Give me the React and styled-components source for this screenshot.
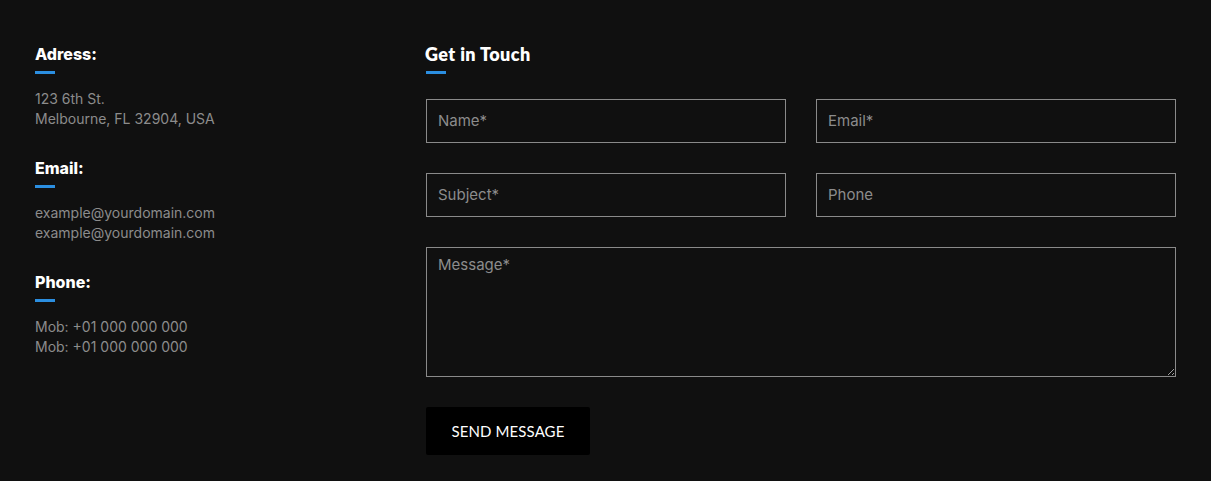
import styled, { createGlobalStyle } from 'styled-components'

const Global = createGlobalStyle`
  html, body {
    margin: 0;
    background: #101010;
  }
  * { box-sizing: border-box; }
`

const info = [
  { title: 'Adress:', lines: ['123 6th St.', 'Melbourne, FL 32904, USA'] },
  { title: 'Email:', lines: ['example@yourdomain.com', 'example@yourdomain.com'] },
  { title: 'Phone:', lines: ['Mob: +01 000 000 000', 'Mob: +01 000 000 000'] },
]

export default function App() {
  return (
    <>
      <Global />
      <Page>
        <Aside>
          {info.map((item) => (
            <Block key={item.title}>
              <Titulo>{item.title}</Titulo>
              <Linea />
              <Texto>
                {item.lines.map((l, i) => <span key={i}>{l}</span>)}
              </Texto>
            </Block>
          ))}
        </Aside>

        <Form onSubmit={(e) => e.preventDefault()}>
          <FormTitulo>Get in Touch</FormTitulo>
          <Linea />
          <Grid>
            <Input placeholder="Name*" />
            <Input placeholder="Email*" />
            <Input placeholder="Subject*" />
            <Input placeholder="Phone" />
            <Area placeholder="Message*" />
          </Grid>
          <Boton type="submit">Send Message</Boton>
        </Form>
      </Page>
    </>
  )
}

const Page = styled.div`
  width: 1211px;
  height: 481px;
  padding: 44px 35px 0 35px;
  display: grid;
  grid-template-columns: 391px 750px;
  font-family: Inter, "Open Sans", sans-serif;
`

const Aside = styled.div`
  display: flex;
  flex-direction: column;
  gap: 29px;
`

const Block = styled.div`
  display: flex;
  flex-direction: column;
`

const Titulo = styled.h4`
  margin: 0;
  font-size: 16px;
  line-height: 20px;
  font-weight: 800;
  color: #fff;
`

const Linea = styled.div`
  width: 20px;
  height: 3px;
  margin-top: 7px;
  background: #2b8ee0;
`

const Texto = styled.p`
  margin: 15px 0 0;
  display: flex;
  flex-direction: column;
  font-size: 14px;
  line-height: 20px;
  color: #8c8c8c;
  letter-spacing: 0;
`

const Form = styled.form`
  display: flex;
  flex-direction: column;
  align-items: flex-start;
`

const FormTitulo = styled.h3`
  margin: 0 0 0 -1px;
  font-family: Lato, sans-serif;
  font-size: 18px;
  line-height: 20px;
  font-weight: 800;
  color: #fff;
  letter-spacing: 0.4px;
`

const Grid = styled.div`
  width: 750px;
  margin-top: 25px;
  display: grid;
  grid-template-columns: 1fr 1fr;
  column-gap: 30px;
  row-gap: 30px;
`

const Input = styled.input`
  height: 44px;
  padding: 0 11px 2px;
  background: #101010;
  border: 1px solid #8a8a8a;
  border-radius: 0;
  font-family: Inter, "Open Sans", sans-serif;
  font-size: 15px;
  color: #ccc;
  outline: none;

  &::placeholder {
    color: #8c8c8c;
  }
`

const Area = styled.textarea`
  grid-column: 1 / 3;
  height: 130px;
  padding: 7px 11px;
  background: #101010;
  border: 1px solid #8a8a8a;
  border-radius: 0;
  font-family: Inter, "Open Sans", sans-serif;
  font-size: 15px;
  color: #ccc;
  outline: none;
  resize: vertical;

  &::placeholder {
    color: #8c8c8c;
  }
`

const Boton = styled.button`
  margin-top: 30px;
  width: 164px;
  height: 48px;
  background: #000;
  border: none;
  border-radius: 2px;
  color: #fff;
  font-family: Lato, sans-serif;
  font-size: 15px;
  letter-spacing: 0.1px;
  text-transform: uppercase;
  cursor: pointer;
`
